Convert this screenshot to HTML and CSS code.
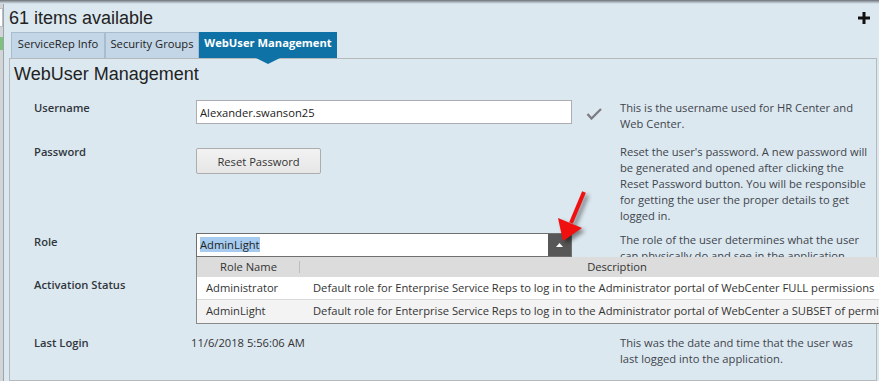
FILE: index.html
```html
<!DOCTYPE html>
<html>

<head>
    <title>WebUser Management</title>
    <link rel="stylesheet" href="styles.css">
</head>

<body>
    <div class="shade"></div>
    <div class="page">
        <div class="side">
            <div class="side-input"></div>
            <div class="side-flag"></div>
        </div>

        <div class="main">
            <div class="topbar">
                <h1>61 items available</h1>
                <svg class="plus" width="12" height="12" viewBox="0 0 12 12">
                    <path d="M0 6h12M6 0v12" stroke="#111" stroke-width="3" />
                </svg>
            </div>

            <div class="tabs">
                <div class="tab">ServiceRep Info</div>
                <div class="tab">Security Groups</div>
                <div class="tab active">WebUser Management</div>
            </div>

            <div class="panel">
                <h2>WebUser Management</h2>

                <div class="form">
                    <div class="row row-user">
                        <div class="label">Username</div>
                        <div class="field">
                            <input class="text" type="text" value="Alexander.swanson25">
                        </div>
                        <div class="status">
                            <svg class="check" width="16" height="12" viewBox="0 0 16 12">
                                <path d="M1.5 6 L5.5 10.5 L15 1" fill="none" stroke="#7b7d80" stroke-width="2.3" />
                            </svg>
                        </div>
                        <div class="help">This is the username used for HR Center and Web Center.</div>
                    </div>

                    <div class="row row-pass">
                        <div class="label">Password</div>
                        <div class="field">
                            <button class="reset">Reset Password</button>
                        </div>
                        <div class="status"></div>
                        <div class="help">Reset the user's password. A new password will be generated and opened after clicking the Reset Password button. You will be responsible for getting the user the proper details to get logged in.</div>
                    </div>

                    <div class="row row-role">
                        <div class="label">Role</div>
                        <div class="field">
                            <div class="combo">
                                <div class="combo-text"><span class="selected">AdminLight</span></div>
                                <div class="combo-btn">
                                    <svg width="7" height="4" viewBox="0 0 7 4">
                                        <path d="M0 4 L3.5 0 L7 4 Z" fill="#fff" />
                                    </svg>
                                </div>

                                <!-- open role list -->
                                <div class="dropdown">
                                    <div class="dd-head">
                                        <div class="dd-name">Role Name</div>
                                        <div class="dd-desc">Description</div>
                                    </div>
                                    <div class="dd-row">
                                        <div class="dd-name">Administrator</div>
                                        <div class="dd-desc">Default role for Enterprise Service Reps to log in to the Administrator portal of WebCenter FULL permissions</div>
                                    </div>
                                    <div class="dd-row alt">
                                        <div class="dd-name">AdminLight</div>
                                        <div class="dd-desc">Default role for Enterprise Service Reps to log in to the Administrator portal of WebCenter a SUBSET of permissions</div>
                                    </div>
                                </div>

                                <svg class="pointer" width="50" height="60" viewBox="0 0 50 60">
                                    <path d="M34 4 L21 35" stroke="#f01010" stroke-width="4" />
                                    <path d="M8 30 L32 40 L13 53 Z" fill="#f01010" />
                                </svg>
                            </div>
                        </div>
                        <div class="status"></div>
                        <div class="help">The role of the user determines what the user can physically do and see in the application.</div>
                    </div>

                    <div class="row row-active">
                        <div class="label">Activation Status</div>
                        <div class="field"></div>
                        <div class="status"></div>
                        <div class="help"></div>
                    </div>

                    <div class="row row-login">
                        <div class="label">Last Login</div>
                        <div class="field">
                            <div class="value">11/6/2018 5:56:06 AM</div>
                        </div>
                        <div class="status"></div>
                        <div class="help">This was the date and time that the user was last logged into the application.</div>
                    </div>
                </div>
            </div>
        </div>
    </div>
</body>

</html>
```

FILE: styles.css
```css
* {
    box-sizing: border-box;
}

body {
    margin: 0;
    width: 879px;
    height: 381px;
    overflow: hidden;
    background-color: #dce8f0;
    font-family: "Open Sans", "Noto Sans", sans-serif;
    font-size: 11.2px;
    color: #333;
}

.shade {
    height: 4px;
    background: linear-gradient(#6c7075, #b4bec6 60%, #dce8f0);
}

.page {
    display: flex;
    height: 377px;
}

.side {
    width: 4px;
    flex-shrink: 0;
    background-color: #d2d5d8;
    border-right: 1px solid #9ea4aa;
}

.side-input {
    height: 19px;
    margin-top: 4px;
    background-color: #fff;
    border: 1px solid #b9bec3;
    border-left: 0;
}

.side-flag {
    height: 13px;
    margin-top: 10px;
    background-color: #7cc17c;
}

.main {
    flex: 1;
    min-width: 0;
    margin-left: 5px;
    display: flex;
    flex-direction: column;
}

.topbar {
    height: 28px;
    display: flex;
    justify-content: space-between;
    align-items: flex-start;
}

.topbar h1 {
    margin: 3px 0 0;
    font: normal 18px/22px "Liberation Sans", Arial, sans-serif;
    color: #222;
}

.plus {
    margin: 8px 9px 0 0;
}

/* tabs */
.tabs {
    display: flex;
    height: 26px;
    margin-left: 2px;
}

.tab {
    width: 94px;
    height: 26px;
    line-height: 22px;
    text-align: center;
    white-space: nowrap;
    color: #222;
    background-color: #c3d6e7;
    border: 1px solid #a9bccd;
    border-bottom: 0;
}

.tab.active {
    position: relative;
    z-index: 1;
    width: 138px;
    line-height: 20px;
    font-weight: 700;
    color: #fff;
    background-color: #0f72a6;
    border-color: #0f72a6;
}

.tab.active::after {
    content: "";
    position: absolute;
    top: 100%;
    left: 50%;
    margin-left: -12px;
    border-top: 6px solid #0f72a6;
    border-left: 12px solid transparent;
    border-right: 12px solid transparent;
}

/* panel */
.panel {
    flex: 1;
    margin-right: 2px;
    padding: 4px 0 0 4px;
    border: 1px solid #b6b9bc;
    background-color: #dce8f0;
}

.panel h2 {
    margin: 0;
    font: normal 18px/22px "Liberation Sans", Arial, sans-serif;
    color: #222;
}

.form {
    margin: 15px 0 0 20px;
}

.row {
    display: grid;
    grid-template-columns: 162px 376px 48px 250px;
    line-height: 16px;
}

.row-pass {
    margin-top: 12px;
}

.row-role {
    min-height: 34px;
    margin-top: 8px;
}

.row-role .label {
    padding-top: 2px;
}

.row-active {
    min-height: 48px;
    margin-top: 11px;
}

.row-login {
    margin-top: 10px;
}

.label {
    font-weight: 600;
    color: #30363c;
}

.help {
    color: #3e454c;
}

.text {
    display: block;
    width: 376px;
    height: 24px;
    padding: 0 3px;
    border: 1px solid #abadb3;
    background-color: #fff;
    font-family: inherit;
    font-size: 11.2px;
    color: #222;
    outline: none;
}

.check {
    margin: 8px 0 0 14px;
}

.reset {
    width: 125px;
    height: 26px;
    margin-top: 4px;
    border: 1px solid #adadad;
    border-radius: 2px;
    background: linear-gradient(#f2f2f2, #e6e6e6);
    font-family: inherit;
    font-size: 11.2px;
    color: #333;
}

/* role combo */
.combo {
    position: relative;
    display: flex;
    width: 376px;
    height: 24px;
    margin-top: 1px;
    border: 1px solid #6f6f6f;
    background-color: #fff;
}

.combo-text {
    flex: 1;
    padding: 0 3px;
    line-height: 22px;
    color: #1e1e1e;
}

.selected {
    background-color: #a6cbee;
}

.combo-btn {
    width: 23px;
    display: flex;
    justify-content: center;
    align-items: center;
    background-color: #575757;
}

.dropdown {
    position: absolute;
    top: calc(100% + 1px);
    left: -1px;
    z-index: 2;
    width: 738px;
    white-space: nowrap;
    background-color: #fff;
    border-left: 1px solid #8a8a8a;
    border-bottom: 1px solid #8a8a8a;
    color: #333;
}

.dd-head,
.dd-row {
    display: grid;
    grid-template-columns: 103px 634px;
}

.dd-head {
    height: 20px;
    line-height: 20px;
    text-align: center;
    background-color: #dcdcdc;
}

.dd-head .dd-name {
    background: linear-gradient(#bdbdbd, #bdbdbd) right center / 1px 12px no-repeat;
}

.dd-row {
    height: 23px;
    line-height: 22px;
    border-bottom: 1px solid #dadada;
}

.dd-row.alt {
    border-bottom: 0;
    background-color: #f3f3f3;
}

.dd-row .dd-name {
    padding-left: 9px;
}

.dd-row .dd-desc {
    padding-left: 13px;
}

.pointer {
    position: absolute;
    left: 353px;
    top: -46px;
    z-index: 3;
    filter: drop-shadow(3px 3px 2px rgba(0, 0, 0, 0.45));
}

.value {
    margin-left: -5px;
    color: #333;
}
```
